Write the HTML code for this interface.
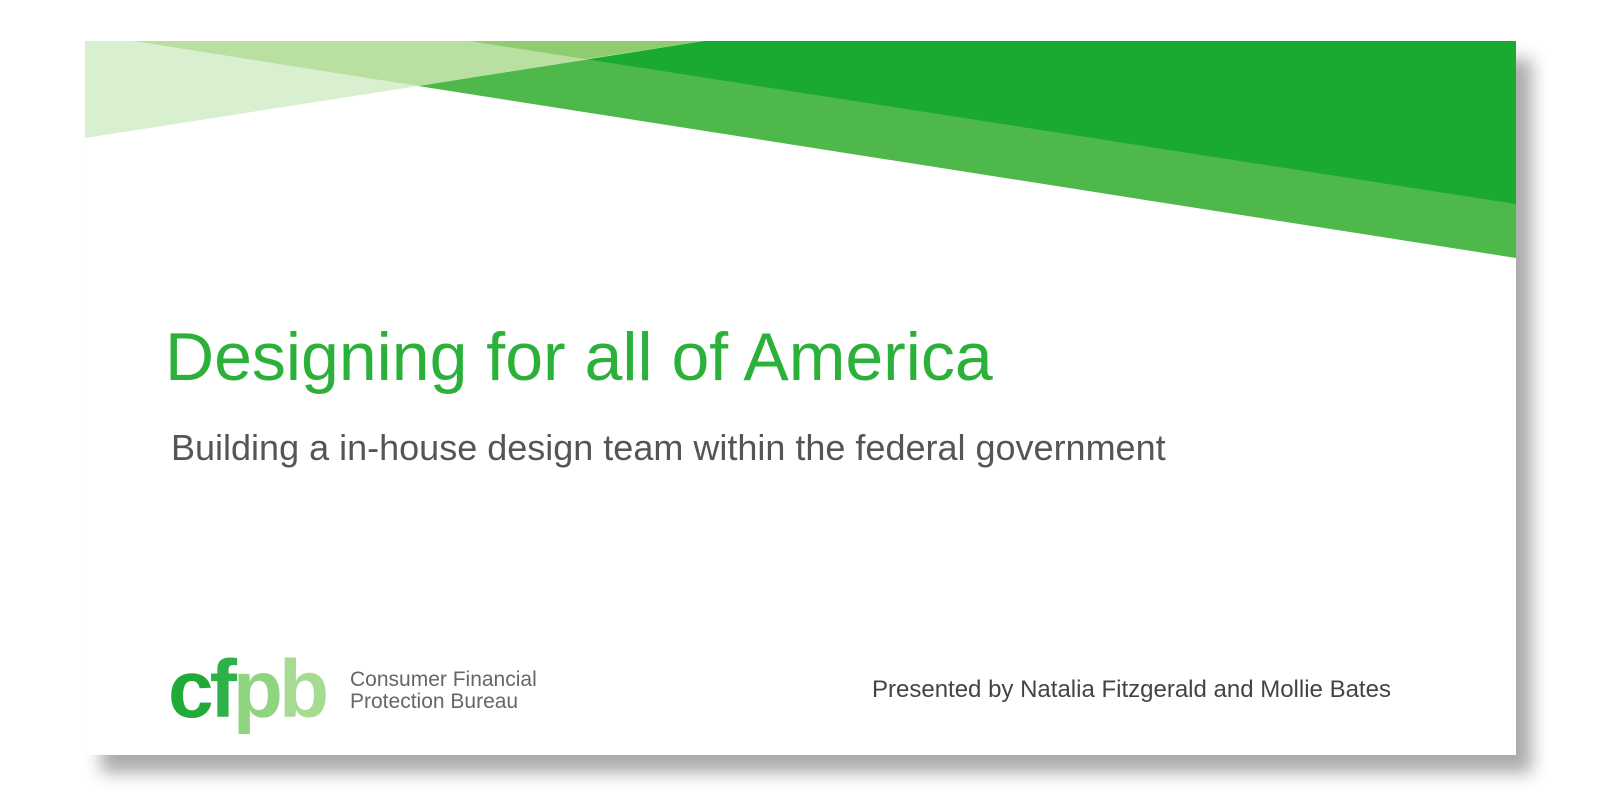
<!DOCTYPE html>
<html><head><style>
html,body{margin:0;padding:0;background:#fff;width:1600px;height:796px;overflow:hidden;font-family:"Liberation Sans",Arial,sans-serif}
.slide{position:absolute;left:85px;top:41px;width:1431px;height:714px;background:#fff;box-shadow:16px 18px 16px rgba(0,0,0,.33)}
svg{position:absolute;left:0;top:0}
.t{position:absolute;white-space:nowrap}
</style></head><body>
<div class="slide"></div>
<svg width="1600" height="796">
<polygon points="85,41 133,41 418,86 85,138" fill="#d8f0cf"/>
<polygon points="418,86 704,41 1516,41 1516,258" fill="#4fb84a"/>
<polygon points="585,59 704,41 1516,41 1516,204" fill="#1aaa31"/>
<polygon points="133,41 704,41 418,86" fill="#b9e0a0"/>
<polygon points="469,41 704,41 585,59" fill="#8fcc70"/>
</svg>
<div class="t" style="left:165px;top:318px;font-size:68px;color:#2bb03a">Designing for all of America</div>
<div class="t" style="left:171px;top:427px;font-size:36px;color:#555">Building a in-house design team within the federal government</div>
<div class="t" style="left:872px;top:676px;font-size:24px;color:#444">Presented by Natalia Fitzgerald and Mollie Bates</div>
<div class="t" style="left:168px;top:643px;font-size:82px;font-weight:bold;color:#20aa3a;letter-spacing:-4px">c<span style="color:#2fb14a">f</span><span style="color:#8fd47e">p</span><span style="color:#a5dc92">b</span></div>
<div class="t" style="left:350px;top:669px;font-size:21px;line-height:22px;color:#666">Consumer Financial<br>Protection Bureau</div>
</body></html>
